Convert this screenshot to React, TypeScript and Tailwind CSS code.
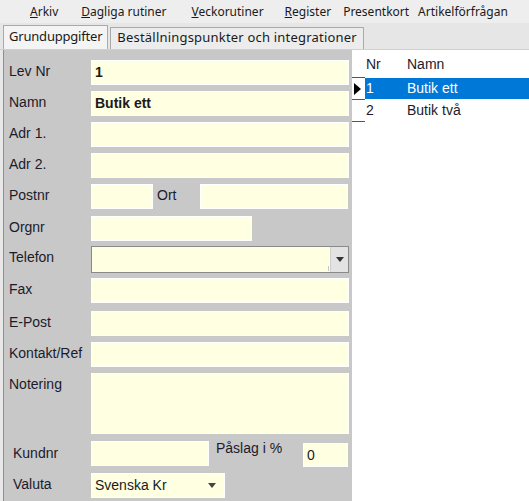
import React from "react";

const font = { fontFamily: '"Liberation Sans", Arial, sans-serif' };
const ui = { fontFamily: '"Noto Sans", "Open Sans", sans-serif' };

function Input({ w, h = 25, children, bold }: { w: string; h?: number; children?: React.ReactNode; bold?: boolean }) {
  return (
    <div
      className={`${w} border border-white bg-[#ffffe1] flex items-center px-[3px] text-[14px] text-[#1b1b1b] ${bold ? "font-bold" : ""}`}
      style={{ height: h }}
    >
      {children}
    </div>
  );
}

function Row({ label, children, mt, indent }: { label: string; children: React.ReactNode; mt: string; indent?: boolean }) {
  return (
    <div className={`flex items-start ${mt}`}>
      <div className={`w-[87px] ${indent ? "pl-[9px]" : "pl-[5px]"} pt-[1px] text-[14px] text-[#1b1b2b]`}>{label}</div>
      {children}
    </div>
  );
}

export default function App() {
  return (
    <div className="w-[529px] h-[501px] overflow-hidden bg-[#f0f0f0] flex flex-col" style={font}>
      {/* Menu bar */}
      <div className="h-[23px] flex items-center text-[12px] text-[#1a1a1a] bg-[#eeeeee]" style={ui}>
        <span className="ml-[30px]"><u>A</u>rkiv</span>
        <span className="ml-[23px]"><u>D</u>agliga rutiner</span>
        <span className="ml-[25px]"><u>V</u>eckorutiner</span>
        <span className="ml-[21px]"><u>R</u>egister</span>
        <span className="ml-[12px]">Presentkort</span>
        <span className="ml-[9px]">Artikelförfrågan</span>
      </div>
      {/* Tabs */}
      <div className="h-[26px] flex items-end pl-[3px] bg-[#e6e6e6] text-[13px] text-[#1a1a1a]" style={ui}>
        <div className="h-[24px] px-[5px] pb-[2px] flex items-center border border-b-0 border-[#aaaaaa] bg-[#f4f4f4] tracking-[-0.2px]">Grunduppgifter</div>
        <div className="h-[22px] ml-[2px] px-[6px] pb-[1px] flex items-center border border-b-0 border-[#aaaaaa] bg-[#ececec] tracking-[0.2px]">Beställningspunkter och integrationer</div>
      </div>
      {/* Content */}
      <div className="flex-1 flex border-t border-[#d0d0d0] bg-[#f4f4f4]">
        <div className="w-[4px] bg-[#e8e8e8] border-r border-[#8e8e8e]" />
        <div className="w-[348px] bg-[#c8c8c8] pt-[10px]">
          <Row label="Lev Nr" mt="mt-0"><Input w="w-[258px]" bold>1</Input></Row>
          <Row label="Namn" mt="mt-[6px]"><Input w="w-[258px]" bold>Butik ett</Input></Row>
          <Row label="Adr 1." mt="mt-[6px]"><Input w="w-[258px]" /></Row>
          <Row label="Adr 2." mt="mt-[6px]"><Input w="w-[258px]" /></Row>
          <Row label="Postnr" mt="mt-[6px]">
            <Input w="w-[62px]" />
            <div className="w-[47px] pl-[4px] pt-[1px] text-[14px] text-[#1b1b2b]">Ort</div>
            <Input w="w-[148px]" />
          </Row>
          <Row label="Orgnr" mt="mt-[7px]"><Input w="w-[161px]" /></Row>
          <Row label="Telefon" mt="mt-[5px]">
            <div className="w-[258px] h-[27px] border border-[#8a8a8a] bg-[#ffffe1] flex">
              <div className="flex-1 relative">
                <div className="absolute right-[1px] bottom-[1px] w-[1px] h-[5px] bg-[#c8c8c8]" />
              </div>
              <div className="w-[18px] bg-[#e3e3e3] border-l border-[#d0d0d0] flex items-center justify-center">
                <svg width="8" height="5" viewBox="0 0 8 5"><path d="M0 0h8L4 5z" fill="#333" /></svg>
              </div>
            </div>
          </Row>
          <Row label="Fax" mt="mt-[5px]"><Input w="w-[258px]" /></Row>
          <Row label="E-Post" mt="mt-[8px]"><Input w="w-[258px]" /></Row>
          <Row label="Kontakt/Ref" mt="mt-[6px]"><Input w="w-[258px]" /></Row>
          <Row label="Notering" mt="mt-[6px]"><Input w="w-[258px]" h={61} /></Row>
          <div className="flex items-start mt-[7px]">
            <div className="w-[87px] pl-[9px] pt-[2px] text-[14px] text-[#1b1b2b]">Kundnr</div>
            <Input w="w-[118px]" />
            <div className="w-[94px] pl-[7px] text-[14px] text-[#1b1b2b] -mt-[3px]">Påslag i %</div>
            <div className="mt-[2px]"><Input w="w-[45px]" h={24}>0</Input></div>
          </div>
          <div className="flex items-start mt-[6px]">
            <div className="w-[87px] pl-[9px] pt-[1px] text-[14px] text-[#1b1b2b]">Valuta</div>
            <div className="w-[134px] h-[25px] border border-white bg-[#ffffe1] flex items-center pl-[3px] pr-[8px] text-[14px] text-[#1b1b1b]">
              <span className="flex-1">Svenska Kr</span>
              <svg width="8" height="5" viewBox="0 0 8 5"><path d="M0 0h8L4 5z" fill="#444" /></svg>
            </div>
          </div>
        </div>
        {/* Grid */}
        <div className="flex-1 bg-white text-[14px] text-[#1b1b2b]">
          <div className="h-[27px] flex items-center pt-[1px]">
            <div className="w-[14px]" />
            <div className="w-[41px]">Nr</div>
            <div>Namn</div>
          </div>
          <div className="flex">
            <div className="w-[13px] border-t border-[#555]" />
          </div>
          <div className="flex h-[21px]">
            <div className="w-[13px] flex items-center">
              <svg width="7" height="12" viewBox="0 0 7 12" className="ml-[2px]"><path d="M0 0l7 6-7 6z" fill="#000" /></svg>
            </div>
            <div className="flex-1 bg-[#0078d7] text-white flex items-center">
              <div className="w-[42px] pl-[1px]">1</div>
              <div>Butik ett</div>
            </div>
          </div>
          <div className="flex">
            <div className="w-[13px] border-t border-[#555]" />
          </div>
          <div className="flex h-[21px]">
            <div className="w-[13px]" />
            <div className="flex-1 flex items-center">
              <div className="w-[42px] pl-[1px]">2</div>
              <div>Butik två</div>
            </div>
          </div>
          <div className="flex">
            <div className="w-[13px] border-t border-[#555]" />
          </div>
        </div>
      </div>
    </div>
  );
}
